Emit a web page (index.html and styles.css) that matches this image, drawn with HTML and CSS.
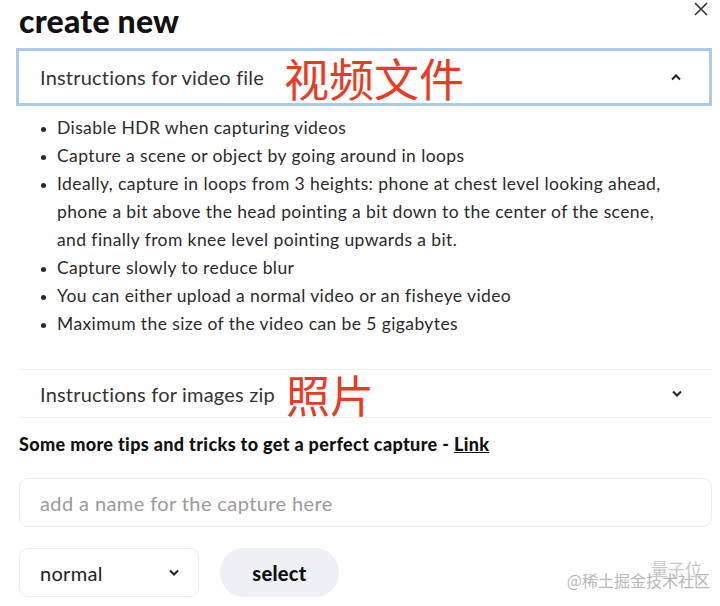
FILE: index.html
```html
<!DOCTYPE html>
<html lang="en">
<head>
    <meta charset="UTF-8">
    <meta name="viewport" content="width=device-width, initial-scale=1.0">
    <title>create new</title>
    <link rel="stylesheet" href="styles.css">
</head>
<body>
    <div class="modal">
        <div class="modal-head">
            <h1 class="title">create new</h1>
            <button class="close" aria-label="close">
                <svg width="14" height="14" viewBox="0 0 14 14"><path d="M1 1L13 13M13 1L1 13" stroke="#333" stroke-width="1.6" fill="none"/></svg>
            </button>
        </div>

        <div class="acc acc-open">
            <div class="acc-label">
                <span>Instructions for video file</span>
                <span class="note">视频文件</span>
            </div>
            <svg class="chev" width="12" height="8" viewBox="0 0 12 8"><path d="M2 6.5L6 2.5L10 6.5" stroke="#222" stroke-width="2" fill="none"/></svg>
        </div>
        <ul class="tips-list">
            <li>Disable HDR when capturing videos</li>
            <li>Capture a scene or object by going around in loops</li>
            <li>Ideally, capture in loops from 3 heights: phone at chest level looking ahead, phone a bit above the head pointing a bit down to the center of the scene, and finally from knee level pointing upwards a bit.</li>
            <li>Capture slowly to reduce blur</li>
            <li>You can either upload a normal video or an fisheye video</li>
            <li>Maximum the size of the video can be 5 gigabytes</li>
        </ul>

        <div class="acc acc-closed">
            <div class="acc-label">
                <span>Instructions for images zip</span>
                <span class="note">照片</span>
            </div>
            <svg class="chev" width="12" height="8" viewBox="0 0 12 8"><path d="M2 1.5L6 5.5L10 1.5" stroke="#222" stroke-width="2" fill="none"/></svg>
        </div>

        <p class="more">Some more tips and tricks to get a perfect capture - <a href="#">Link</a></p>

        <input class="name-input" type="text" placeholder="add a name for the capture here">

        <div class="actions">
            <div class="select-box">
                <span>normal</span>
                <svg width="12" height="8" viewBox="0 0 12 8"><path d="M2 1.5L6 5.5L10 1.5" stroke="#222" stroke-width="2" fill="none"/></svg>
            </div>
            <button class="btn">select</button>
            <div class="watermark">
                <span class="wm-back">@稀土掘金技术社区</span>
                <span class="wm-front">量子位</span>
            </div>
        </div>
    </div>
</body>
</html>
```

FILE: styles.css
```css
body {
    margin: 0;
    background: #fff;
    font-family: Lato, "Noto Sans", sans-serif;
    color: #222;
}
.modal {
    padding: 0 8px 0 16px;
}
.modal-head {
    display: flex;
    justify-content: space-between;
    align-items: flex-start;
    height: 48px;
}
.title {
    margin: 0;
    padding: 2px 0 0 3px;
    font-size: 32px;
    font-weight: 900;
    letter-spacing: 0.2px;
    line-height: 38px;
    color: #111;
}
.close {
    border: none;
    background: none;
    padding: 0;
    margin: 2px 4px 0 0;
    width: 14px;
    height: 14px;
}
.acc {
    display: flex;
    justify-content: space-between;
    align-items: center;
    box-sizing: border-box;
}
.acc-label {
    display: flex;
    align-items: center;
    font-size: 20px;
    letter-spacing: 0.2px;
    color: #333;
}
.note {
    margin-left: 20px;
    font-family: "Noto Sans CJK SC", sans-serif;
    font-size: 45px;
    letter-spacing: 0;
    line-height: 1;
    color: #ea3a22;
}
.acc-open {
    height: 58px;
    border: 3px solid #a9cceb;
    padding: 0 27px 0 21px;
}
.acc-closed {
    height: 49px;
    margin: 0 0 0 3px;
    border-top: 1px solid #efefef;
    border-bottom: 1px solid #efefef;
    padding: 0 29px 0 21px;
}
.acc-closed .note {
    margin-left: 11px;
    font-size: 44px;
}
.tips-list {
    margin: 8px 0 31px 0;
    padding: 0 0 0 41px;
    font-size: 17.5px;
    letter-spacing: 0.4px;
    line-height: 28px;
    color: #2a2a2a;
}
.tips-list li {
    max-width: 616px;
}
.tips-list li::marker {
    font-size: 14px;
}
.more {
    margin: 14px 0 22px 3px;
    font-size: 18px;
    font-weight: 900;
    letter-spacing: 0.35px;
    line-height: 24px;
    color: #111;
}
.more a {
    color: #111;
    text-decoration: underline;
}
.name-input {
    display: block;
    box-sizing: border-box;
    width: calc(100% - 3px);
    height: 49px;
    margin-left: 3px;
    padding: 0 20px;
    border: 1px solid #ececec;
    border-radius: 9px;
    font-family: Lato, "Noto Sans", sans-serif;
    font-size: 20px;
    letter-spacing: 0.4px;
    color: #222;
}
.name-input::placeholder {
    color: #9a9a9a;
}
.actions {
    display: flex;
    align-items: center;
    gap: 21px;
    margin: 21px 0 0 3px;
}
.select-box {
    display: flex;
    justify-content: space-between;
    align-items: center;
    box-sizing: border-box;
    width: 180px;
    height: 49px;
    padding: 0 18px 0 20px;
    border: 1px solid #ececec;
    border-radius: 9px;
    font-size: 20px;
    letter-spacing: 0.3px;
    color: #222;
}
.btn {
    width: 119px;
    height: 49px;
    border: none;
    border-radius: 24px;
    background: #edf1f5;
    font-family: Lato, "Noto Sans", sans-serif;
    font-size: 20px;
    font-weight: 900;
    letter-spacing: 0.3px;
    color: #111;
}
.watermark {
    position: relative;
    margin-left: auto;
    margin-right: 2px;
    margin-top: 14px;
    font-family: "Noto Sans CJK SC", sans-serif;
    font-size: 16px;
    color: #b8b8b8;
}
.wm-front {
    position: absolute;
    right: 8px;
    top: -12px;
    font-size: 17px;
    color: #c8c8c8;
}
```
